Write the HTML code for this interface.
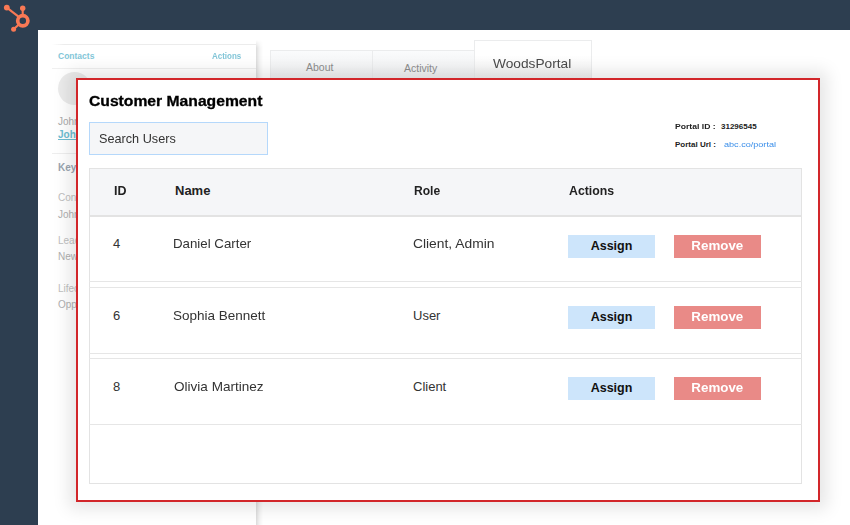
<!DOCTYPE html>
<html><head><meta charset="utf-8">
<style>
*{margin:0;padding:0;box-sizing:border-box;}
html,body{width:850px;height:525px;overflow:hidden;background:#fff;font-family:"Liberation Sans",sans-serif;}
.a{position:absolute;white-space:nowrap;}
#topbar{position:absolute;left:0;top:0;width:850px;height:30px;background:#2d3e50;}
#leftbar{position:absolute;left:0;top:0;width:38px;height:525px;background:#2d3e50;}
#panel{position:absolute;left:38px;top:45px;width:218px;height:500px;background:#fff;}
#pshadow{position:absolute;left:256px;top:40px;width:7px;height:490px;background:linear-gradient(90deg,rgba(0,0,0,.14),rgba(0,0,0,.05) 45%,rgba(0,0,0,0));-webkit-mask-image:linear-gradient(transparent,#000 8px);}
#ptop{position:absolute;left:52px;top:43.5px;width:204px;height:1.5px;background:linear-gradient(90deg,rgba(235,235,235,0),#ececec 12px);}
.tab{position:absolute;top:50px;height:28px;background:linear-gradient(#fafbfc,#f0f1f2);border:1px solid #ebeced;border-bottom:none;border-right:none;color:#8e8e8e;font-size:10.5px;}
#modal{position:absolute;left:76px;top:78px;width:744px;height:424px;background:#fff;border:2px solid #d2262a;box-shadow:0 0 16px 7px rgba(0,0,0,.10);}
.m{position:absolute;white-space:nowrap;color:#222;transform-origin:0 50%;}
.line{position:absolute;left:89px;width:713px;height:1px;background:#e6e6e6;}
.btn{position:absolute;width:87px;height:23px;font-weight:bold;font-size:12.5px;text-align:center;line-height:22px;}
.assign{left:568px;background:#cde5fb;color:#111;}
.remove{left:674px;background:#e98a87;color:#fff;}
</style></head>
<body>
<div id="topbar"></div>
<div id="leftbar"></div>
<svg class="a" style="left:0;top:0" width="38" height="38" viewBox="0 0 38 38">
  <circle cx="22.8" cy="20.8" r="5.1" fill="none" stroke="#f97955" stroke-width="3.7"/>
  <line x1="22.7" y1="8" x2="22.7" y2="15" stroke="#f97955" stroke-width="2.1"/>
  <circle cx="22.7" cy="8.2" r="2.7" fill="#f97955"/>
  <line x1="6.8" y1="7.6" x2="18.5" y2="16.6" stroke="#f97955" stroke-width="2.1"/>
  <circle cx="6.8" cy="7.6" r="2.9" fill="#f97955"/>
  <line x1="13.6" y1="29.2" x2="18.8" y2="24.4" stroke="#f97955" stroke-width="2.1"/>
  <circle cx="13.6" cy="29.3" r="2.5" fill="#f97955"/>
</svg>

<div id="panel"></div><div id="ptop"></div><div id="pshadow"></div>
<div class="a" style="left:58px;top:50.5px;font-size:8.5px;font-weight:bold;color:#83c6d8;">Contacts</div>
<div class="a" style="left:212px;top:50.5px;font-size:8.5px;font-weight:bold;color:#83c6d8;transform:scaleX(0.94);transform-origin:0 50%;">Actions</div>
<div class="a" style="left:52px;top:68px;width:204px;height:1px;background:#f0f0f0;"></div>
<div class="a" style="left:58px;top:72px;width:33px;height:33px;border-radius:50%;background:#ebebeb;"></div>
<div class="a" style="left:58px;top:116px;font-size:10px;color:#aaa;">John Smith</div>
<div class="a" style="left:58px;top:129px;font-size:10px;font-weight:bold;color:#6cbdd1;text-decoration:underline;">John@smith.com</div>
<div class="a" style="left:52px;top:153px;width:204px;height:1px;background:#eeeeee;"></div>
<div class="a" style="left:58px;top:162px;font-size:10px;font-weight:bold;color:#9aa5b0;">Key info</div>
<div class="a" style="left:58px;top:192px;font-size:10px;color:#c0c0c0;">Contact owner</div>
<div class="a" style="left:58px;top:209px;font-size:10px;color:#b0b0b0;">John Smith</div>
<div class="a" style="left:58px;top:235px;font-size:10px;color:#c0c0c0;">Lead status</div>
<div class="a" style="left:58px;top:251px;font-size:10px;color:#b0b0b0;">New</div>
<div class="a" style="left:58px;top:283px;font-size:10px;color:#c0c0c0;">Lifecycle stage</div>
<div class="a" style="left:58px;top:299px;font-size:10px;color:#b0b0b0;">Opportunity</div>

<div class="tab" style="left:270px;width:102px;"><span class="a" style="left:35px;top:10px;">About</span></div>
<div class="tab" style="left:372px;width:102px;"><span class="a" style="left:31px;top:10.5px;">Activity</span></div>
<div class="tab" style="left:474px;top:40px;width:118px;height:38px;border-right:1px solid #ebeced;background:linear-gradient(#fff 40%,#f1f1f1);color:#4a4a4a;font-size:13px;"><span class="a" style="left:17.5px;top:15px;transform:scaleX(1.055);transform-origin:0 50%;">WoodsPortal</span></div>

<div id="modal"></div>
<div class="m" style="left:89px;top:93px;font-size:14px;font-weight:bold;color:#000;-webkit-text-stroke:0.3px #000;transform:scaleX(1.12);">Customer Management</div>
<div class="a" style="left:89px;top:122px;width:179px;height:33px;background:#f5f6f8;border:1px solid #b5d8fb;"></div>
<div class="m" style="left:99px;top:131px;font-size:13px;color:#333;transform:scaleX(0.975);">Search Users</div>
<div class="m" style="left:675px;top:122px;font-size:8px;font-weight:bold;transform:scaleX(1.076);">Portal ID :</div>
<div class="m" style="left:721px;top:122px;font-size:8px;font-weight:bold;">31296545</div>
<div class="m" style="left:675px;top:140px;font-size:8px;font-weight:bold;">Portal Url :</div>
<div class="m" style="left:724px;top:140px;font-size:8px;color:#3a8ee9;transform:scaleX(1.135);">abc.co/portal</div>

<div class="a" style="left:89px;top:168px;width:713px;height:316px;border:1px solid #e3e3e3;"></div>
<div class="a" style="left:90px;top:169px;width:711px;height:46px;background:#f5f6f8;"></div>
<div class="a" style="left:89px;top:215px;width:713px;height:2px;background:#e3e3e3;"></div>
<div class="m" style="left:114px;top:183px;font-size:13px;font-weight:bold;transform:scaleX(0.96);">ID</div>
<div class="m" style="left:175px;top:183px;font-size:13px;font-weight:bold;">Name</div>
<div class="m" style="left:414px;top:183px;font-size:13px;font-weight:bold;transform:scaleX(0.93);">Role</div>
<div class="m" style="left:569px;top:183px;font-size:13px;font-weight:bold;transform:scaleX(0.946);">Actions</div>

<div class="line" style="top:281px;"></div>
<div class="line" style="top:287px;"></div>
<div class="line" style="top:353px;"></div>
<div class="line" style="top:358px;"></div>
<div class="line" style="top:424px;"></div>

<div class="m" style="left:113px;top:236px;font-size:13px;color:#333;">4</div>
<div class="m" style="left:173.4px;top:236px;font-size:13px;color:#333;transform:scaleX(1.021);">Daniel Carter</div>
<div class="m" style="left:413px;top:236px;font-size:13px;color:#333;transform:scaleX(1.063);">Client, Admin</div>
<div class="btn assign" style="top:235px;">Assign</div>
<div class="btn remove" style="top:235px;"><span style="display:inline-block;transform:scaleX(1.068)">Remove</span></div>

<div class="m" style="left:113px;top:307.5px;font-size:13px;color:#333;">6</div>
<div class="m" style="left:173.2px;top:307.5px;font-size:13px;color:#333;transform:scaleX(1.039);">Sophia Bennett</div>
<div class="m" style="left:413px;top:307.5px;font-size:13px;color:#333;">User</div>
<div class="btn assign" style="top:306px;">Assign</div>
<div class="btn remove" style="top:306px;"><span style="display:inline-block;transform:scaleX(1.068)">Remove</span></div>

<div class="m" style="left:113px;top:379px;font-size:13px;color:#333;">8</div>
<div class="m" style="left:173.9px;top:379px;font-size:13px;color:#333;transform:scaleX(1.042);">Olivia Martinez</div>
<div class="m" style="left:413px;top:379px;font-size:13px;color:#333;">Client</div>
<div class="btn assign" style="top:377px;">Assign</div>
<div class="btn remove" style="top:377px;"><span style="display:inline-block;transform:scaleX(1.068)">Remove</span></div>
</body></html>
